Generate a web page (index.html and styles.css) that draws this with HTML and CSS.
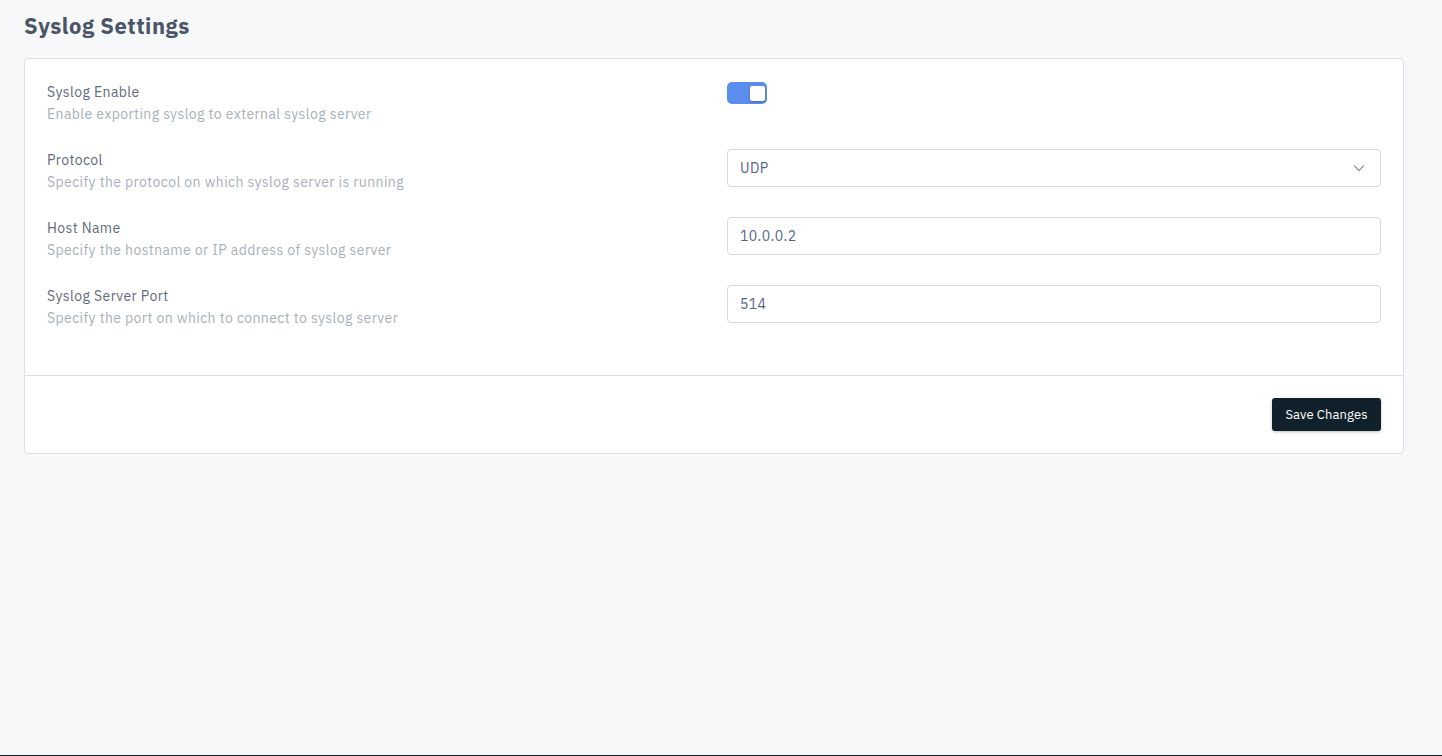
FILE: index.html
```html
<!DOCTYPE html>
<html lang="en">
<head>
  <meta charset="UTF-8" />
  <title>Syslog Settings</title>
  <link rel="stylesheet" href="styles.css">
</head>
<body>

  <div class="page">
    <h1 class="page-title">Syslog Settings</h1>

    <div class="card">
      <div class="card-body">
        <div class="row">
          <div class="row-text">
            <div class="row-label">Syslog Enable</div>
            <div class="row-desc">Enable exporting syslog to external syslog server</div>
          </div>
          <div class="row-control">
            <label class="toggle">
              <input type="checkbox" checked>
              <span class="toggle-track"><span class="toggle-knob"></span></span>
            </label>
          </div>
        </div>

        <div class="row">
          <div class="row-text">
            <div class="row-label">Protocol</div>
            <div class="row-desc">Specify the protocol on which syslog server is running</div>
          </div>
          <div class="row-control">
            <div class="select">
              <span>UDP</span>
              <svg width="12" height="12" viewBox="0 0 12 12" fill="none">
                <path d="M1.5 4l4.5 4.5L10.5 4" stroke="#8e97a8" stroke-width="1.2" stroke-linecap="round" stroke-linejoin="round"/>
              </svg>
            </div>
          </div>
        </div>

        <div class="row">
          <div class="row-text">
            <div class="row-label">Host Name</div>
            <div class="row-desc">Specify the hostname or IP address of syslog server</div>
          </div>
          <div class="row-control">
            <input class="text-input" type="text" value="10.0.0.2">
          </div>
        </div>

        <div class="row">
          <div class="row-text">
            <div class="row-label">Syslog Server Port</div>
            <div class="row-desc">Specify the port on which to connect to syslog server</div>
          </div>
          <div class="row-control">
            <input class="text-input" type="text" value="514">
          </div>
        </div>
      </div>

      <div class="card-footer">
        <button class="btn-save">Save Changes</button>
      </div>
    </div>
  </div>

</body>
</html>
```

FILE: styles.css
```css
html, body {
  margin: 0;
  padding: 0;
  height: 100%;
}
body {
  font-family: "IBM Plex Sans", Roboto, "Liberation Sans", sans-serif;
  letter-spacing: 0.4px;
  background: #f7f8fa;
  color: #5a6473;
  border-bottom: 1px solid #1a1f26;
  box-sizing: border-box;
}
.page {
  padding: 12px 38px 0 24px;
}
.page-title {
  margin: 0;
  font-size: 22px;
  line-height: 28px;
  font-weight: 700;
  letter-spacing: 0.5px;
  color: #4a5568;
}
.card {
  margin-top: 18px;
  background: #fff;
  border: 1px solid #dcdfe4;
  border-radius: 4px;
}
.card-body {
  padding: 22px 22px 22px;
  border-bottom: 1px solid #dcdfe4;
}
.row {
  display: grid;
  grid-template-columns: 680px 1fr;
  margin-bottom: 24px;
}
.row-label {
  font-size: 14px;
  line-height: 22px;
  color: #616b7a;
}
.row-desc {
  font-size: 14px;
  line-height: 22px;
  color: #a8b0bc;
}
.toggle {
  display: inline-block;
  cursor: pointer;
}
.toggle input {
  display: none;
}
.toggle-track {
  display: flex;
  justify-content: flex-end;
  align-items: center;
  width: 40px;
  height: 22px;
  margin-top: 1px;
  padding: 0 2px;
  box-sizing: border-box;
  background: #5b8def;
  border-radius: 5px;
}
.toggle-knob {
  width: 15px;
  height: 15px;
  background: #fff;
  border-radius: 2px;
  box-shadow: 0 1px 2px rgba(0, 0, 0, 0.25);
}
.select,
.text-input {
  display: flex;
  align-items: center;
  justify-content: space-between;
  width: 100%;
  height: 38px;
  padding: 0 15px 0 12px;
  box-sizing: border-box;
  border: 1px solid #d6dae1;
  border-radius: 4px;
  background: #fff;
  font-family: inherit;
  font-size: 14px;
  letter-spacing: 0.4px;
  color: #55658a;
}
.text-input {
  outline: none;
}
.card-footer {
  display: flex;
  justify-content: flex-end;
  padding: 22px;
}
.btn-save {
  width: 109px;
  height: 33px;
  padding: 0;
  border: none;
  border-radius: 3px;
  background: #11212b;
  color: #fff;
  font-family: inherit;
  font-size: 13px;
  letter-spacing: 0.1px;
  box-shadow: 0 1px 3px rgba(0, 0, 0, 0.25);
  cursor: pointer;
}
```
